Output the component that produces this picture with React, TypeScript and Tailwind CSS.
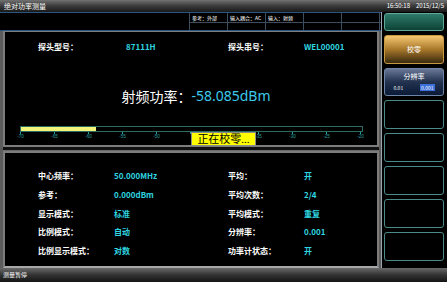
import React from "react";

const FONT = "font-['Noto_Sans_CJK_SC','Noto_Sans',sans-serif]";

const LOWER_ROWS: [string, string, string, string][] = [
  ["中心频率：", "50.000MHz", "平均：", "开"],
  ["参考：", "0.000dBm", "平均次数：", "2/4"],
  ["显示模式：", "标准", "平均模式：", "重复"],
  ["比例模式：", "自动", "分辨率：", "0.001"],
  ["比例显示模式：", "对数", "功率计状态：", "开"],
];

// labels under the calibration popup are covered, so they stay blank
const TICKS = ["-70", "-65", "-60", "-55", "-50", "", "", "-35", "-30", "-25", "-20"];

function InfoStrip() {
  const cells = ["参考：外部", "输入耦合：AC", "输入：射频", "", ""];
  return (
    <div className="flex h-[19px] border-y border-[#2a5580] bg-black">
      <div className="w-[190px] border-r border-[#3b4d5e]" />
      <div className="flex flex-1 flex-col">
        <div className="flex h-[10px] border-b border-[#3b4d5e]">
          {cells.map((c, i) => (
            <div
              key={i}
              className="flex w-[38px] items-center border-r border-[#3b4d5e] pl-[2px] text-[5px] leading-none text-white"
            >
              {c}
            </div>
          ))}
        </div>
        <div className="flex flex-1">
          {cells.map((_, i) => (
            <div key={i} className="w-[38px] border-r border-[#3b4d5e]" />
          ))}
        </div>
      </div>
    </div>
  );
}

// dBm scale under the power readout; bar starts 15px into the panel
function Scale() {
  return (
    <svg width="360" height="16" className="mt-[21px] block">
      <rect x="15.5" y="0.5" width="342" height="5" fill="black" stroke="#2c6b62" />
      <rect x="16" y="1" width="75" height="4" fill="#f4f47a" />
      {TICKS.map((t, i) => {
        const x = 15.5 + i * 34;
        return (
          <g key={i}>
            <line x1={x} y1="6" x2={x} y2="8" stroke="#2aa0a0" strokeWidth="1" />
            {t && (
              <text x={x} y="12" fontSize="4.5" fill="#2aa0a0" textAnchor="middle" fontFamily="Liberation Sans, sans-serif">
                {t}
              </text>
            )}
          </g>
        );
      })}
    </svg>
  );
}

function Pair({ label, value, w }: { label: string; value: string; w: string }) {
  return (
    <>
      <span className={`${w} text-white`}>{label}</span>
      <span className="text-[#2fd6e0]">{value}</span>
    </>
  );
}

function SideButton({ children, className }: { children?: React.ReactNode; className: string }) {
  return <div className={`rounded-[3px] border ${className}`}>{children}</div>;
}

export default function App() {
  return (
    <div className={`relative flex h-[282px] w-[447px] flex-col overflow-hidden bg-black ${FONT}`}>
      {/* title bar */}
      <div className="flex h-[12px] items-center justify-between bg-gradient-to-b from-[#727272] via-[#3a3a3a] to-[#1a1a1a] pl-[4px] text-white">
        <span className="text-[7px] leading-none">绝对功率测量</span>
        <span className="mr-[3px] flex gap-[6px] text-[6px] leading-none">
          <span>16:50:18</span>
          <span>2015/12/5</span>
        </span>
      </div>

      <div className="flex h-[256px]">
        {/* left area */}
        <div className="flex w-[381px] flex-col">
          <InfoStrip />
          <div className="flex flex-1 flex-col border-l-[3px] border-r-[2px] border-[#5c5c5c] bg-[#1b1b1b]">
            {/* upper panel */}
            <div className="flex h-[116px] flex-col border-2 border-t-[1px] border-[#7c7c7c] bg-black">
              <div className="mt-[9px] flex text-[8px] font-bold leading-[12px]">
                <div className="flex w-[223px] pl-[33px]">
                  <Pair label="探头型号：" value="87111H" w="w-[88px]" />
                </div>
                <div className="flex">
                  <Pair label="探头串号：" value="WEL00001" w="w-[76px]" />
                </div>
              </div>
              <div className="mt-[34px] flex justify-center pl-[10px] text-[14px] leading-[18px]">
                <span className="text-white">射频功率：</span>
                <span className="font-['Noto_Sans',sans-serif] text-[#3cc8ea]">-58.085dBm</span>
              </div>
              <Scale />
            </div>
            <div className="h-[4px] border-b border-[#6a6a6a] bg-[#111]" />
            {/* lower panel */}
            <div className="flex flex-1 flex-col border-2 border-[#7c7c7c] border-b-[#a8a8a8] bg-black pt-[14px]">
              {LOWER_ROWS.map(([l1, v1, l2, v2]) => (
                <div key={l1} className="flex h-[18.7px] items-center text-[8px] font-bold leading-none">
                  <div className="flex w-[223px] pl-[33px]">
                    <Pair label={l1} value={v1} w="w-[76px]" />
                  </div>
                  <div className="flex">
                    <Pair label={l2} value={v2} w="w-[76px]" />
                  </div>
                </div>
              ))}
            </div>
          </div>
        </div>

        {/* right buttons */}
        <div className="flex w-[66px] flex-col gap-[4px] border-l border-[#9aa7b0] bg-black pl-[2px] pr-[3px] pt-[1px]">
          <SideButton className="h-[18px] border-[#5fa89a] bg-gradient-to-b from-[#2f7a6a] to-[#0c4336]" />
          <SideButton className="flex h-[29px] items-center justify-center border-[#c89a40] bg-gradient-to-b from-[#f6c870] via-[#a8782a] to-[#3a2a0e] text-[7px] text-white">
            校零
          </SideButton>
          <SideButton className="flex h-[28px] flex-col items-center border-[#6f86a8] bg-gradient-to-b from-[#6a7896] via-[#22324f] to-[#0b1a36] pt-[3px] text-white">
            <span className="text-[7px] leading-[9px]">分辨率</span>
            <div className="mt-[3px] flex w-full items-center justify-around text-[5px] leading-none">
              <span>0.01</span>
              <span className="bg-[#3c6fd8] px-[1px] py-[1px]">0.001</span>
            </div>
          </SideButton>
          {[0, 1, 2, 3, 4].map((i) => (
            <SideButton key={i} className="h-[29px] border-[#4a8a88] bg-black" />
          ))}
        </div>
      </div>

      {/* status bar */}
      <div className="flex h-[14px] items-center bg-gradient-to-b from-[#6a6a6a] via-[#333] to-[#151515] pl-[3px] text-[6px] leading-none text-white">
        测量暂停
      </div>

      {/* calibration popup */}
      <div className="absolute left-[191px] top-[132px] flex h-[14px] w-[65px] items-center justify-center border border-[#8a8a8a] bg-[#ffff00] font-['Liberation_Serif','Noto_Sans_CJK_SC',serif] text-[11px] leading-none text-black">
        正在校零...
      </div>
    </div>
  );
}
